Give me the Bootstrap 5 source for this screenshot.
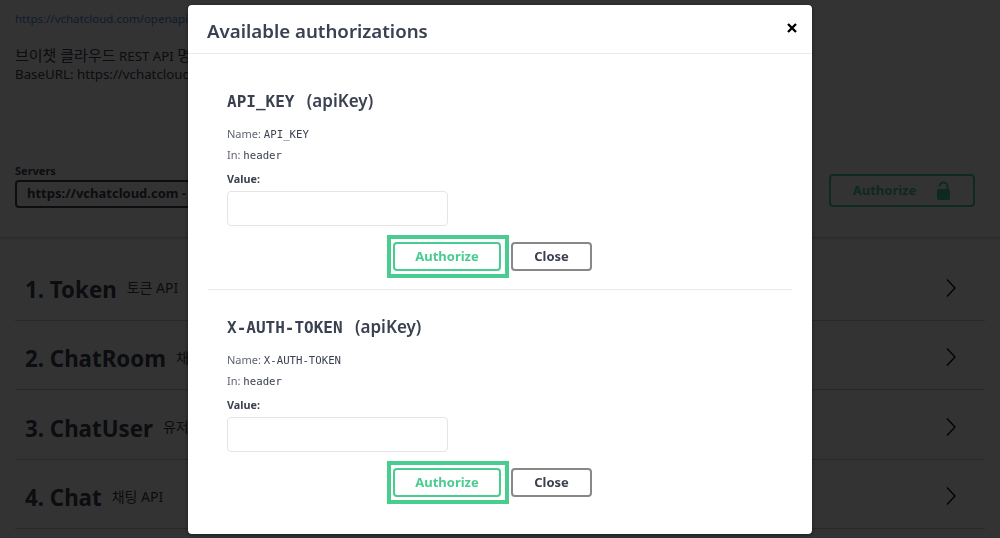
<!DOCTYPE html>
<html lang="ko">
<head>
  <meta charset="UTF-8" />
  <meta name="viewport" content="width=device-width, initial-scale=1.0" />
  <title>Swagger UI</title>
  <link href="https://cdn.jsdelivr.net/npm/bootstrap@5.3.2/dist/css/bootstrap.min.css" rel="stylesheet">
  <style>
    html, body {
      height: 100%;
      overflow: hidden;
    }
    body {
      font-family: "Noto Sans", "Noto Sans CJK KR", sans-serif;
      color: #3b4151;
      background: #fff;
    }
    .mono-txt {
      font-family: "DejaVu Sans Mono", "Liberation Mono", monospace;
      line-height: 1;
    }
    .page-wrap {
      padding: 0 15px;
    }
    .base-link {
      display: block;
      padding-top: 10px;
      height: 46px;
      font-size: 11.5px;
      line-height: 18px;
      color: #4990e2;
      text-decoration: none;
    }
    .desc-txt {
      font-size: 13.3px;
      line-height: 18px;
      height: 118px;
    }
    .desc-ko {
      font-size: 15px;
    }
    .scheme-band {
      height: 74px;
      border-bottom: 1px solid #d8d8d8;
      box-shadow: 0 1px 2px rgba(0, 0, 0, .15);
      margin: 0 -15px 13px;
      padding: 0 25px 0 15px;
    }
    .servers-lbl {
      font-size: 11px;
      font-weight: 700;
      line-height: 14px;
      margin-bottom: 2px;
    }
    .servers-sel {
      width: 300px;
      height: 28px;
      border: 2px solid #41444e;
      border-radius: 4px;
      padding: 0 10px;
      font-size: 13px;
      font-weight: 700;
      line-height: 23px;
      white-space: nowrap;
      overflow: hidden;
    }
    .top-auth {
      width: 146px;
      height: 33px;
      margin-top: 10px;
      gap: 20px;
      border: 2px solid #49cc90;
      border-radius: 4px;
      background: transparent;
      color: #49cc90;
      font-size: 13px;
      font-weight: 700;
    }
    .tag-row {
      height: 69.5px;
      border-bottom: 1px solid rgba(59, 65, 81, .3);
      padding: 5px 29px 0 10px;
    }
    .tag-name {
      font-size: 22.3px;
      font-weight: 700;
      line-height: 1;
      margin-top: 4px;
    }
    .tag-note {
      font-size: 14px;
      margin-left: 10px;
    }
    .dim-layer {
      position: fixed;
      inset: 0;
      background: rgba(0, 0, 0, .8);
    }
    .auth-dialog {
      position: fixed;
      left: 188px;
      top: 5px;
      width: 624px;
      height: 529px;
      background: #fff;
      border-radius: 4px;
      box-shadow: 0 1px 4px rgba(0, 0, 0, .5);
      overflow: hidden;
    }
    .auth-head {
      height: 49px;
      border-bottom: 1px solid #ebebeb;
      padding: 0 15px 0 19px;
    }
    .auth-title {
      font-size: 18.7px;
      font-weight: 600;
      line-height: 1;
      margin: 4px 0 0;
    }
    .auth-x {
      display: block;
      padding: 0;
      margin-top: -2px;
      border: 0;
      background: none;
      line-height: 0;
    }
    .auth-body {
      padding: 0 20px;
    }
    .auth-sec {
      padding: 36px 0 0 19px;
      height: 236px;
      border-bottom: 1px solid #ebebeb;
    }
    .auth-sec + .auth-sec {
      border-bottom: 0;
      padding-top: 26px;
    }
    .auth-h {
      font-size: 17px;
      font-weight: 600;
      line-height: 22px;
      margin-bottom: 14px;
    }
    .auth-h .mono-txt {
      font-size: 16px;
      margin-right: 8px;
    }
    .auth-line {
      font-size: 11px;
      line-height: 16px;
      color: #5f6470;
      margin-bottom: 5px;
    }
    .auth-line .mono-txt {
      font-size: 10.7px;
      color: #3b4151;
    }
    .val-lbl {
      display: block;
      font-size: 10.8px;
      font-weight: 700;
      line-height: 16px;
      margin: 8px 0 4px;
    }
    .val-input {
      display: block;
      width: 221px;
      height: 35px;
      border: 1px solid #e5e5e5;
      border-radius: 4px;
      background: #fff;
      outline: 0;
    }
    .auth-btns {
      width: 365px;
      height: 43px;
      margin-top: 9px;
      gap: 2px;
    }
    .ok-frame {
      display: block;
      border: 4px solid #49cc90;
      padding: 3px 4px 3px 2px;
    }
    .auth-btn {
      display: block;
      height: 29px;
      padding: 0;
      background: transparent;
      border-radius: 4px;
      font-size: 13px;
      font-weight: 700;
      line-height: 1;
    }
    .auth-ok {
      width: 108px;
      border: 2px solid #49cc90;
      color: #49cc90;
    }
    .auth-no {
      width: 81px;
      border: 2px solid #888;
      color: #3b4151;
    }
  </style>
</head>
<body>
  <div class="page-wrap">
    <a class="base-link" href="#">https://vchatcloud.com/openapi/v3/api-docs</a>
    <div class="desc-txt">
      <span class="desc-ko">브이챗 클라우드</span> REST API <span class="desc-ko">명세서</span><br>
      BaseURL: https://vchatcloud.com
    </div>
    <div class="scheme-band d-flex justify-content-between">
      <div>
        <div class="servers-lbl">Servers</div>
        <div class="servers-sel">https://vchatcloud.com - Generated server url</div>
      </div>
      <button class="top-auth d-flex align-items-center justify-content-center" type="button">
        Authorize
        <svg width="15" height="20" viewBox="0 0 15 20"><path d="M3.500 5.500a4 4 0 0 1 8 0V9" fill="none" stroke="#49cc90" stroke-width="2"/><rect x="1" y="8" width="13" height="11" rx="2" fill="#49cc90"/></svg>
      </button>
    </div>
    <div>
      <div class="tag-row d-flex align-items-center justify-content-between">
        <div class="d-flex align-items-center"><span class="tag-name">1. Token</span><span class="tag-note">토큰 API</span></div>
        <svg width="10" height="18" viewBox="0 0 10 18"><path d="M1 .5l8 8.5-8 8.500" fill="none" stroke="#000" stroke-width="1.3"/></svg>
      </div>
      <div class="tag-row d-flex align-items-center justify-content-between">
        <div class="d-flex align-items-center"><span class="tag-name">2. ChatRoom</span><span class="tag-note">채팅방 API</span></div>
        <svg width="10" height="18" viewBox="0 0 10 18"><path d="M1 .5l8 8.5-8 8.500" fill="none" stroke="#000" stroke-width="1.3"/></svg>
      </div>
      <div class="tag-row d-flex align-items-center justify-content-between">
        <div class="d-flex align-items-center"><span class="tag-name">3. ChatUser</span><span class="tag-note">유저 API</span></div>
        <svg width="10" height="18" viewBox="0 0 10 18"><path d="M1 .5l8 8.5-8 8.500" fill="none" stroke="#000" stroke-width="1.3"/></svg>
      </div>
      <div class="tag-row d-flex align-items-center justify-content-between">
        <div class="d-flex align-items-center"><span class="tag-name">4. Chat</span><span class="tag-note">채팅 API</span></div>
        <svg width="10" height="18" viewBox="0 0 10 18"><path d="M1 .5l8 8.5-8 8.500" fill="none" stroke="#000" stroke-width="1.3"/></svg>
      </div>
    </div>
  </div>

  <div class="dim-layer"></div>
  <div class="auth-dialog">
    <div class="auth-head d-flex align-items-center justify-content-between">
      <h3 class="auth-title">Available authorizations</h3>
      <button class="auth-x" type="button" aria-label="Close">
        <svg width="10" height="10" viewBox="0 0 10 10"><path d="M1 1l8 8M9 1l-8 8" stroke="#000" stroke-width="2.4"/></svg>
      </button>
    </div>
    <div class="auth-body">
      <div class="auth-sec">
        <div class="auth-h"><span class="mono-txt">API_KEY</span> (apiKey)</div>
        <div class="auth-line">Name: <span class="mono-txt">API_KEY</span></div>
        <div class="auth-line">In: <span class="mono-txt">header</span></div>
        <label class="val-lbl">Value:</label>
        <input class="val-input" type="text">
        <div class="auth-btns d-flex justify-content-end align-items-center">
          <span class="ok-frame"><button class="auth-btn auth-ok" type="button">Authorize</button></span>
          <button class="auth-btn auth-no" type="button">Close</button>
        </div>
      </div>
      <div class="auth-sec">
        <div class="auth-h"><span class="mono-txt">X-AUTH-TOKEN</span> (apiKey)</div>
        <div class="auth-line">Name: <span class="mono-txt">X-AUTH-TOKEN</span></div>
        <div class="auth-line">In: <span class="mono-txt">header</span></div>
        <label class="val-lbl">Value:</label>
        <input class="val-input" type="text">
        <div class="auth-btns d-flex justify-content-end align-items-center">
          <span class="ok-frame"><button class="auth-btn auth-ok" type="button">Authorize</button></span>
          <button class="auth-btn auth-no" type="button">Close</button>
        </div>
      </div>
    </div>
  </div>
</body>
</html>
